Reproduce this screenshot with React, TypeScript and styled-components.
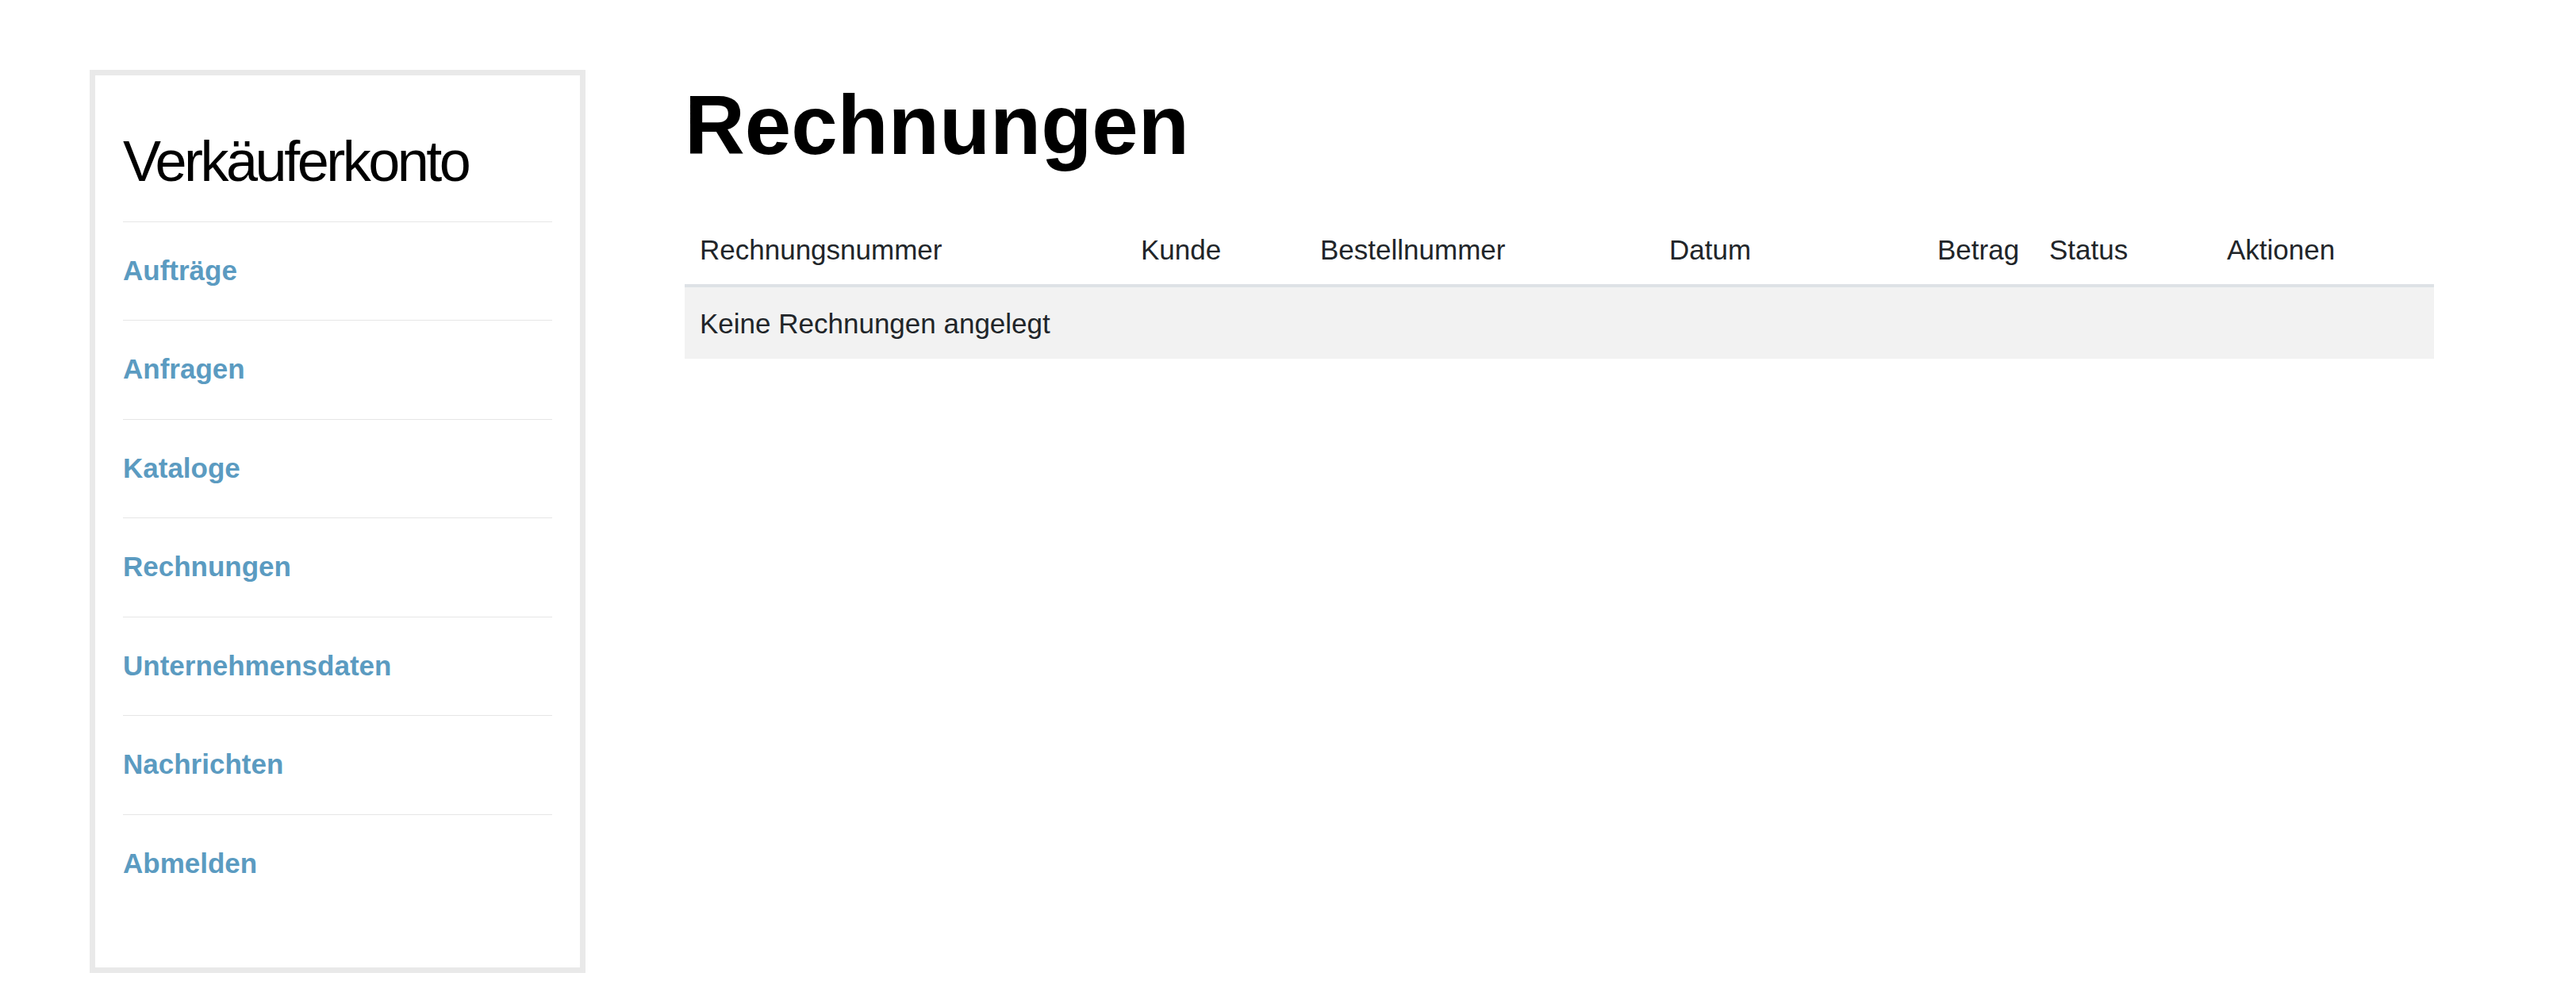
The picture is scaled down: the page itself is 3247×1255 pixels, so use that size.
import { FC } from 'react';
import styled, { createGlobalStyle } from 'styled-components';

const GlobalStyle = createGlobalStyle`
  html, body {
    margin: 0;
    padding: 0;
    background: #fff;
  }
  body {
    font-family: "Liberation Sans", Arial, Helvetica, sans-serif;
    color: #212529;
  }
  * {
    box-sizing: border-box;
  }
`

const Page = styled.div`
  display: flex;
  align-items: flex-start;
  gap: 125px;
  padding: 88px 0 0 113px;
`

const Sidebar = styled.aside`
  width: 625px;
  flex-shrink: 0;
  border: 7px solid #e9e9e9;
  padding: 64.5px 35px 68.5px;
`

const SidebarTitle = styled.h2`
  margin: 0 0 33px;
  font-size: 72px;
  line-height: 86px;
  font-weight: 400;
  letter-spacing: -3.5px;
  color: #000;
`

const NavList = styled.ul`
  list-style: none;
  margin: 0;
  padding: 0;
`

const NavItem = styled.li`
  border-top: 1px solid #e6e6e6;
  padding: 36px 0 37.5px;
`

const NavLink = styled.a`
  font-size: 35px;
  line-height: 50px;
  font-weight: 700;
  color: #5b9bc1;
  text-decoration: none;
`

const Main = styled.main`
  width: 2205px;
  flex-shrink: 0;
`

const Heading = styled.h1`
  margin: 6.5px 0 52px;
  font-size: 105px;
  line-height: 125px;
  font-weight: 700;
  color: #000;
`

const Table = styled.table`
  width: 100%;
  border-collapse: collapse;
  table-layout: fixed;
  font-size: 35px;
  line-height: 52px;
  color: #212529;
`

const HeadCell = styled.th<{ $width: number }>`
  width: ${p => p.$width}px;
  padding: 17.3px 17.3px 17.3px 19px;
  text-align: left;
  font-weight: 400;
  border-bottom: 4.3px solid #dee2e6;
  white-space: nowrap;
`

const EmptyRow = styled.tr`
  background: #f2f2f2;
`

const EmptyCell = styled.td`
  padding: 20px 17.3px 17.7px 19px;
`

const navItems = [
  'Aufträge',
  'Anfragen',
  'Kataloge',
  'Rechnungen',
  'Unternehmensdaten',
  'Nachrichten',
  'Abmelden',
];

const columns: [string, number][] = [
  ['Rechnungsnummer', 556],
  ['Kunde', 226],
  ['Bestellnummer', 440],
  ['Datum', 338],
  ['Betrag', 141],
  ['Status', 224],
  ['Aktionen', 280],
];

const App: FC = () => {
  return (
    <>
      <GlobalStyle />
      <Page>
        <Sidebar>
          <SidebarTitle>Verkäuferkonto</SidebarTitle>
          <NavList>
            {navItems.map(item => (
              <NavItem key={item}>
                <NavLink href="#">{item}</NavLink>
              </NavItem>
            ))}
          </NavList>
        </Sidebar>
        <Main>
          <Heading>Rechnungen</Heading>
          <Table>
            <thead>
              <tr>
                {columns.map(([title, width]) => (
                  <HeadCell key={title} $width={width}>{title}</HeadCell>
                ))}
              </tr>
            </thead>
            <tbody>
              <EmptyRow>
                <EmptyCell colSpan={columns.length}>Keine Rechnungen angelegt</EmptyCell>
              </EmptyRow>
            </tbody>
          </Table>
        </Main>
      </Page>
    </>
  );
}

export default App;
